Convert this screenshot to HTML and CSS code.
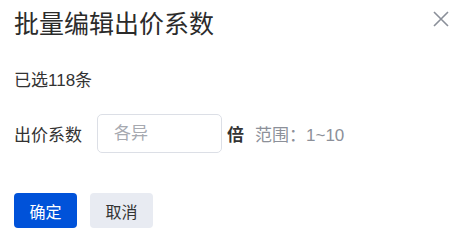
FILE: index.html
```html
<!DOCTYPE html>
<html lang="zh-CN">

<head>
    <meta charset="UTF-8">
    <meta name="viewport" content="width=device-width, initial-scale=1.0">
    <title>批量编辑出价系数</title>
    <link rel="stylesheet" href="styles.css">
</head>

<body>
    <div class="dialog">
        <div class="dialog-header">
            <h1 class="dialog-title">批量编辑出价系数</h1>
            <span class="dialog-close">
                <svg width="16" height="16" viewBox="0 0 16 16">
                    <path d="M1 1 L15 15 M15 1 L1 15" stroke="#8a8f99" stroke-width="1.6" fill="none"/>
                </svg>
            </span>
        </div>

        <div class="summary">已选118条</div>

        <!-- 出价系数 -->
        <div class="form-row">
            <label for="ratio" class="form-label">出价系数</label>
            <input type="text" id="ratio" class="form-input" placeholder="各异">
            <span class="unit">倍</span>
            <span class="hint">范围：1~10</span>
        </div>

        <div class="dialog-footer">
            <button class="btn btn-primary">确定</button>
            <button class="btn btn-default">取消</button>
        </div>
    </div>
</body>

</html>
```

FILE: styles.css
```css
body {
    font-family: "Liberation Sans", "Noto Sans CJK SC", sans-serif;
    margin: 0;
    padding: 0;
    background-color: #fff;
    color: #333;
}

.dialog {
    padding: 7px 14px 0 14px;
}

.dialog-header {
    display: flex;
    justify-content: space-between;
    align-items: center;
    height: 34px;
}

.dialog-title {
    margin: 0;
    font-size: 25px;
    font-weight: normal;
    line-height: 34px;
    color: #2b2b2b;
}

.dialog-close {
    display: flex;
    margin-right: 1px;
    margin-top: -11px;
}

.summary {
    margin-top: 28px;
    font-size: 17px;
    line-height: 24px;
}

.form-row {
    display: flex;
    align-items: center;
    margin-top: 21px;
    font-size: 17px;
}

.form-label {
    margin-right: 15px;
}

.form-input {
    width: 125px;
    height: 39px;
    padding: 0 16px;
    border: 1px solid #dcdfe6;
    border-radius: 5px;
    font-family: inherit;
    font-size: 17px;
    box-sizing: border-box;
    outline: none;
}

.form-input::placeholder {
    color: #a6a9b0;
}

.unit {
    margin-left: 5px;
    font-weight: bold;
}

.hint {
    margin-left: 11px;
    color: #8c9099;
}

.dialog-footer {
    display: flex;
    margin-top: 40px;
}

.btn {
    width: 63px;
    height: 35px;
    border: none;
    border-radius: 4px;
    font-family: inherit;
    font-size: 16px;
    cursor: pointer;
    margin-right: 13px;
    padding: 0;
}

.btn-primary {
    background-color: #0052d9;
    color: #fff;
}

.btn-default {
    background-color: #e8ebf2;
    color: #333;
}
```
